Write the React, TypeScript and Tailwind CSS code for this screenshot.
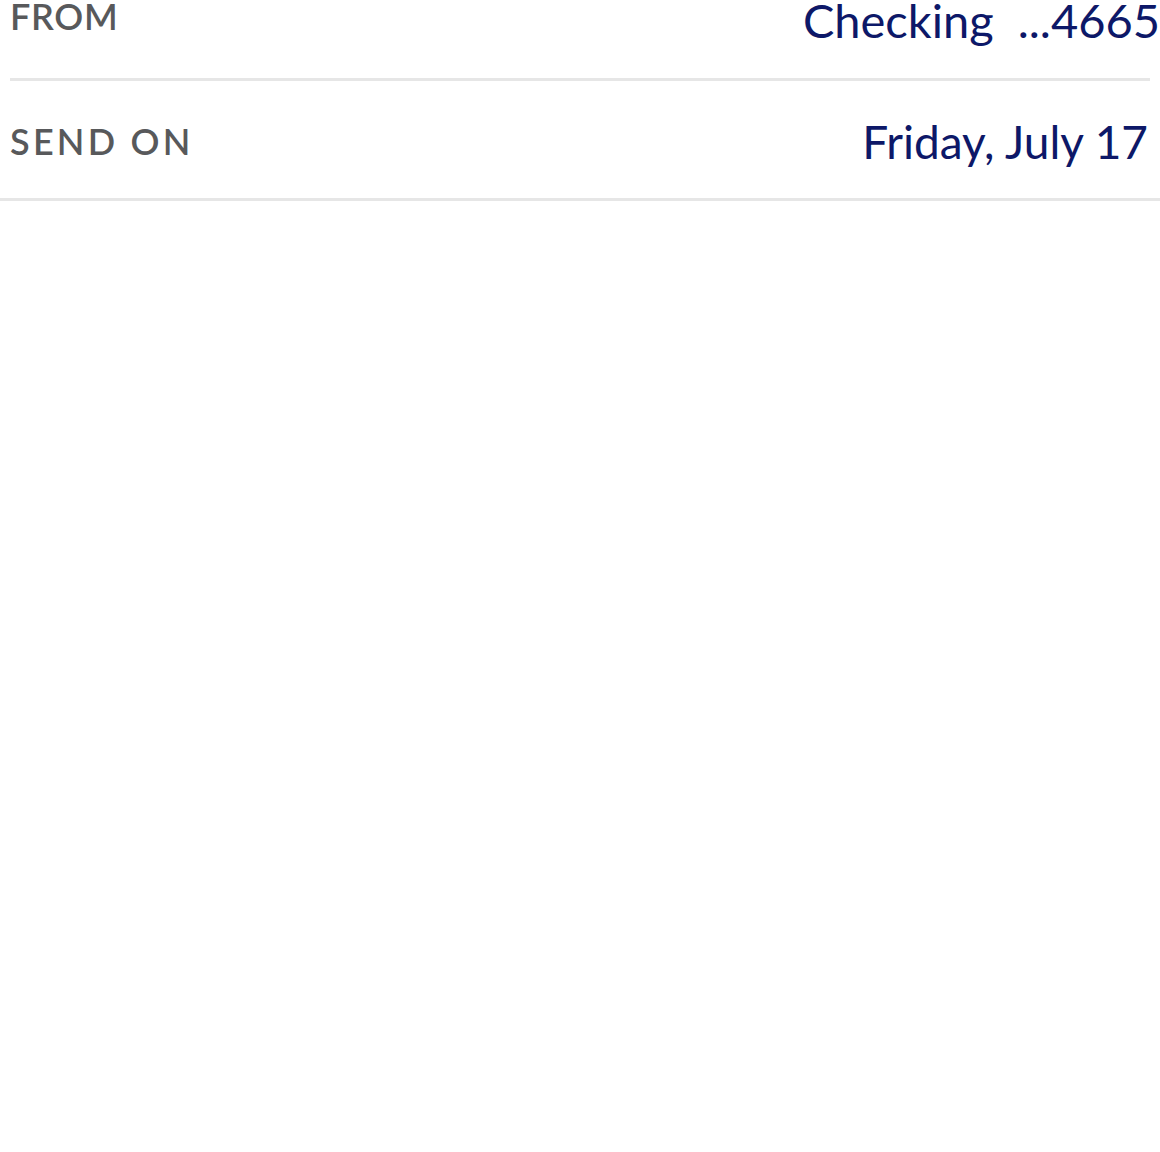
const Row = ({ label, value }: { label: string; value: React.ReactNode }) => {
  return (
    <div className="flex items-center justify-between h-[120px] pt-[3px] border-b-[3px] border-[#e6e6e6] pl-[10px] pr-[12px]">
      <span className="text-[36px] font-semibold tracking-[0.09em] text-[#58595b]">{label}</span>
      <span className="text-[46px] text-[#0d1868]">{value}</span>
    </div>
  );
};

export default function App() {
  return (
    <div className="w-[1160px] h-[1152px] bg-white overflow-hidden font-['Lato',sans-serif]">
      <div className="-mt-[37px]">
        <div className="mx-[10px] border-b-[3px] border-[#e6e6e6] h-[118px] flex items-center justify-between">
          <span className="text-[36px] font-semibold tracking-[0.02em] text-[#58595b] -mt-[10px]">FROM</span>
          <span className="text-[47px] text-[#0d1868] -mr-[10px] whitespace-pre">Checking  ...4665</span>
        </div>
        <Row label="SEND ON" value="Friday, July 17" />
      </div>
    </div>
  );
}
